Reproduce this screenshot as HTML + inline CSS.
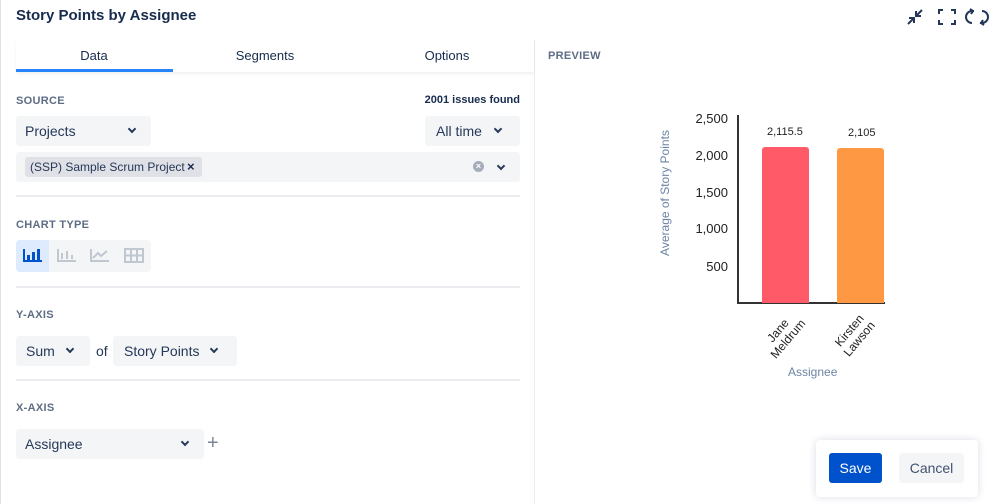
<!DOCTYPE html>
<html><head><meta charset="utf-8"><style>
*{margin:0;padding:0;box-sizing:border-box}
body{width:999px;height:504px;background:#fff;font-family:"Liberation Sans",sans-serif;color:#172b4d;position:relative;overflow:hidden}
.a{position:absolute;white-space:nowrap}
.lbl{font-size:11px;font-weight:bold;color:#5e6c84;letter-spacing:.3px}
.sel{background:#f4f5f7;border-radius:3px;font-size:14px;color:#253858}
.chev{position:absolute;width:6px;height:6px;border-right:2px solid #253858;border-bottom:2px solid #253858;transform:rotate(45deg)}
.hr{position:absolute;left:16px;width:504px;height:2px;background:#ebecf0}
.tk{position:absolute;font-size:13px;color:#222;text-align:right;width:50px}
</style></head><body>
<div class="a" style="left:0;top:0;width:1px;height:504px;background:#dfe1e6"></div>
<div class="a" style="left:16px;top:7px;font-size:15px;font-weight:bold">Story Points by Assignee</div>
<svg class="a" style="left:905px;top:7px" width="84" height="20" fill="none" stroke="#253858" stroke-width="2">
<path d="M3 17l6-6M4 11h5v5M17 3l-6 6M11 4v5h5"/>
<path d="M34 7V3h4M46 3h4v4M50 13v4h-4M38 17h-4v-4"/>
<path d="M67 16a6 6 0 0 1 0-12h2M65 2l3 2-2 3M77 4a6 6 0 0 1 0 12h-2M79 18l-3-2 2-3"/>
</svg>
<div class="a" style="left:534px;top:40px;width:1px;height:464px;background:#ebecf0"></div>
<div class="a" style="left:16px;top:40px;width:518px;height:32px;box-shadow:0 2px 3px rgba(0,0,0,.06)"></div>
<div class="a" style="left:16px;top:48px;width:156px;text-align:center;font-size:13px">Data</div>
<div class="a" style="left:190px;top:48px;width:150px;text-align:center;font-size:13px">Segments</div>
<div class="a" style="left:372px;top:48px;width:150px;text-align:center;font-size:13px">Options</div>
<div class="a" style="left:16px;top:69px;width:157px;height:3px;background:#2684ff"></div>
<div class="a lbl" style="left:16px;top:95px">SOURCE</div>
<div class="a" style="left:404px;top:94px;font-size:11px;font-weight:bold;width:116px;text-align:right">2001 issues found</div>
<div class="a sel" style="left:16px;top:116px;width:135px;height:30px;padding:7px 9px">Projects<span class="chev" style="left:113px;top:10px"></span></div>
<div class="a sel" style="left:425px;top:116px;width:95px;height:30px;padding:7px 11px">All time<span class="chev" style="left:70px;top:10px"></span></div>
<div class="a sel" style="left:16px;top:152px;width:504px;height:30px"></div>
<div class="a" style="left:25px;top:157px;width:177px;height:20px;background:#dfe1e6;border-radius:3px;font-size:12px;color:#253858;padding:3px 5px">(SSP) Sample Scrum Project</div>
<div class="a" style="left:187px;top:159px;font-size:13px;font-weight:bold;color:#172b4d">×</div>
<div class="a" style="left:473px;top:161px;width:11px;height:11px;border-radius:50%;background:#a5adba;color:#fff;font-size:9px;line-height:11px;text-align:center;font-weight:bold">×</div>
<span class="chev" style="left:498px;top:163px"></span>
<div class="hr" style="top:195px"></div>
<div class="a lbl" style="left:16px;top:219px">CHART TYPE</div>
<div class="a" style="left:16px;top:240px;width:135px;height:32px;background:#f4f5f7;border-radius:4px"></div>
<div class="a" style="left:16px;top:240px;width:33px;height:32px;background:#deebff;border-radius:4px 0 0 4px"></div>
<svg class="a" style="left:16px;top:240px" width="135" height="32">
<g fill="#0052cc"><rect x="7" y="9" width="2" height="13"/><rect x="7" y="20" width="19" height="2"/><rect x="11" y="15" width="3" height="5"/><rect x="16" y="12" width="3" height="8"/><rect x="21" y="9" width="3" height="11"/></g>
<g fill="#c1c7d0"><rect x="41" y="9" width="2" height="13"/><rect x="41" y="20" width="19" height="2"/><rect x="45" y="13" width="2" height="6"/><rect x="50" y="11" width="2" height="8"/><rect x="55" y="15" width="2" height="4"/></g>
<g fill="none" stroke="#c1c7d0" stroke-width="2"><path d="M75 9v12h18M77 18l5-5 3 3 6-5"/><rect x="109" y="9" width="18" height="13"/><path d="M115 9v13M121 9v13M109 15.5h18"/></g>
</svg>
<div class="hr" style="top:286px"></div>
<div class="a lbl" style="left:16px;top:309px">Y-AXIS</div>
<div class="a sel" style="left:16px;top:336px;width:74px;height:30px;padding:7px 10px">Sum<span class="chev" style="left:51px;top:10px"></span></div>
<div class="a" style="left:96px;top:343px;font-size:14px;color:#253858">of</div>
<div class="a sel" style="left:113px;top:336px;width:124px;height:30px;padding:7px 11px">Story Points<span class="chev" style="left:98px;top:10px"></span></div>
<div class="hr" style="top:379px"></div>
<div class="a lbl" style="left:16px;top:402px">X-AXIS</div>
<div class="a sel" style="left:16px;top:429px;width:188px;height:30px;padding:7px 9px">Assignee<span class="chev" style="left:166px;top:10px"></span></div>
<div class="a" style="left:207px;top:432px;font-size:20px;color:#7a869a;line-height:22px">+</div>
<div class="a lbl" style="left:548px;top:50px">PREVIEW</div>
<div class="a" style="left:737px;top:115px;width:2px;height:189px;background:#333"></div>
<div class="a" style="left:737px;top:302px;width:148px;height:2px;background:#333"></div>
<div class="a" style="left:762px;top:147px;width:47px;height:156px;background:#ff5a67;border-radius:3px 3px 0 0"></div>
<div class="a" style="left:837px;top:148px;width:47px;height:155px;background:#ff9843;border-radius:3px 3px 0 0"></div>
<div class="tk" style="left:678px;top:111px">2,500</div>
<div class="tk" style="left:678px;top:148px">2,000</div>
<div class="tk" style="left:678px;top:185px">1,500</div>
<div class="tk" style="left:678px;top:221px">1,000</div>
<div class="tk" style="left:678px;top:259px">500</div>
<div class="a" style="left:767px;top:126px;font-size:11px;color:#222">2,115.5</div>
<div class="a" style="left:848px;top:127px;font-size:11px;color:#222">2,105</div>
<div class="a" style="left:585px;top:186px;width:160px;text-align:center;font-size:12px;color:#6b84a3;transform:rotate(-90deg)">Average of Story Points</div>
<div class="a" style="left:760px;top:322px;font-size:12px;color:#222;transform:rotate(-50deg);line-height:13px;text-align:center">Jane<br>Meldrum</div>
<div class="a" style="left:834px;top:322px;font-size:12px;color:#222;transform:rotate(-50deg);line-height:13px;text-align:center">Kirsten<br>Lawson</div>
<div class="a" style="left:788px;top:365px;font-size:12px;color:#6b84a3">Assignee</div>
<div class="a" style="left:816px;top:440px;width:162px;height:57px;background:#fff;border-radius:4px;box-shadow:0 0 8px rgba(9,30,66,.15)"></div>
<div class="a" style="left:829px;top:453px;width:53px;height:30px;background:#0052cc;border-radius:3px;color:#fff;font-size:14px;text-align:center;line-height:30px">Save</div>
<div class="a" style="left:899px;top:453px;width:65px;height:30px;background:#f4f5f7;border-radius:3px;color:#42526e;font-size:14px;text-align:center;line-height:30px">Cancel</div>
</body></html>
